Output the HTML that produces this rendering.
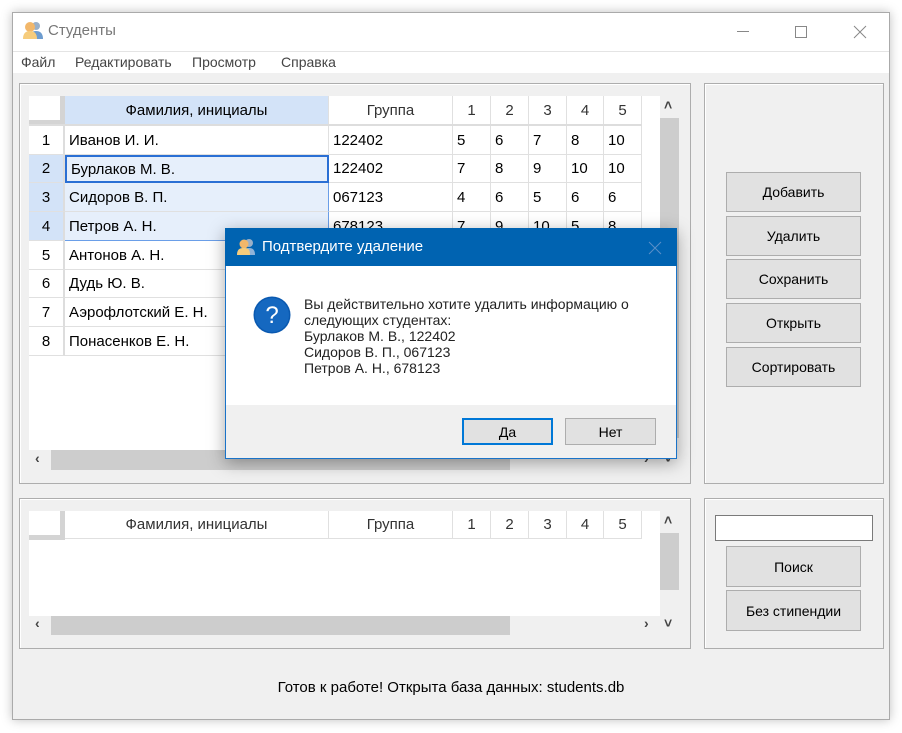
<!DOCTYPE html>
<html><head><meta charset="utf-8"><style>
*{box-sizing:border-box;margin:0;padding:0}
body{width:902px;height:733px;background:#fff;position:relative;overflow:hidden;font-family:"Segoe UI","Liberation Sans","DejaVu Sans",sans-serif;color:#000}
.a{position:absolute}
.win{left:12px;top:12px;width:878px;height:708px;background:#f0f0f0;border:1px solid #aaa;box-shadow:0 0 10px rgba(0,0,0,.25)}
.grp{position:absolute;border:1px solid #adadad;box-shadow:inset 1px 1px 0 #fff}
.btn{position:absolute;background:#e1e1e1;border:1px solid #adadad;font-size:14px;display:flex;align-items:center;justify-content:center}
.c{position:absolute;font-size:15px;display:flex;align-items:center;border-right:1px solid #e0e0e0;border-bottom:1px solid #e0e0e0;padding-left:4px;white-space:nowrap}
.h{justify-content:center;padding-left:0;color:#333}
.rn{justify-content:center;padding-left:0;background:#fff;border-right:2px solid #ddd}
.ar{font-size:14px;color:#444;font-weight:bold}
</style></head><body>
<div class="a win"></div>
<div class="a" style="left:13px;top:13px;width:876px;height:39px;background:#fff;border-bottom:1px solid #e4e4e4"></div>
<svg class="a" style="left:22px;top:20px" width="22" height="20"><circle cx="14" cy="6" r="4" fill="#9ab0c8"/><path d="M7 19c0-6 3-8 7-8s7 2 7 8z" fill="#6d9ccf"/><circle cx="8" cy="7" r="5" fill="#f2b76a"/><path d="M1 19c0-6 3-8 7-8s7 2 7 8z" fill="#f6cc7c"/></svg>
<div class="a" style="left:48px;top:22px;font-size:15px;color:#777">Студенты</div>
<div class="a" style="left:737px;top:31px;width:12px;height:1px;background:#888"></div>
<div class="a" style="left:795px;top:26px;width:12px;height:12px;border:1px solid #888"></div>
<svg class="a" style="left:853px;top:25px" width="14" height="14"><path d="M1 1L13 13M13 1L1 13" stroke="#888" stroke-width="1"/></svg>
<div class="a" style="left:13px;top:52px;width:876px;height:21px;background:#fff"></div>
<div class="a" style="left:21px;top:54px;font-size:14px;color:#444">Файл</div>
<div class="a" style="left:75px;top:54px;font-size:14px;color:#444">Редактировать</div>
<div class="a" style="left:192px;top:54px;font-size:14px;color:#444">Просмотр</div>
<div class="a" style="left:281px;top:54px;font-size:14px;color:#444">Справка</div>
<div class="grp" style="left:19px;top:83px;width:672px;height:401px"></div>
<div class="a" style="left:29px;top:96px;width:631px;height:354px;background:#fff"></div>
<div class="a" style="left:29px;top:96px;width:36px;height:29px;background:#fff;border-right:5px solid #d4d4d4;border-bottom:5px solid #d4d4d4"></div>
<div class="c h" style="left:65px;top:96px;width:264px;height:29px;background:#d3e3f8;color:#000">Фамилия, инициалы</div>
<div class="c h" style="left:329px;top:96px;width:124px;height:29px">Группа</div>
<div class="c h" style="left:453px;top:96px;width:38px;height:29px">1</div>
<div class="c h" style="left:491px;top:96px;width:38px;height:29px">2</div>
<div class="c h" style="left:529px;top:96px;width:38px;height:29px">3</div>
<div class="c h" style="left:567px;top:96px;width:37px;height:29px">4</div>
<div class="c h" style="left:604px;top:96px;width:38px;height:29px">5</div>
<div class="a" style="left:29px;top:124px;width:613px;height:2px;background:#ddd"></div>

<div class="c rn" style="left:29px;top:126px;width:36px;height:29px">1</div><div class="c" style="left:65px;top:126px;width:264px;height:29px">Иванов И. И.</div><div class="c" style="left:329px;top:126px;width:124px;height:29px">122402</div><div class="c" style="left:453px;top:126px;width:38px;height:29px">5</div><div class="c" style="left:491px;top:126px;width:38px;height:29px">6</div><div class="c" style="left:529px;top:126px;width:38px;height:29px">7</div><div class="c" style="left:567px;top:126px;width:37px;height:29px">8</div><div class="c" style="left:604px;top:126px;width:38px;height:29px">10</div>

<div class="c rn" style="left:29px;top:155px;width:36px;height:28px;background:#d3e3f8">2</div><div class="c" style="left:65px;top:155px;width:264px;height:28px;background:#e6effb;border:2px solid #2a6fd4">Бурлаков М. В.</div><div class="c" style="left:329px;top:155px;width:124px;height:28px">122402</div><div class="c" style="left:453px;top:155px;width:38px;height:28px">7</div><div class="c" style="left:491px;top:155px;width:38px;height:28px">8</div><div class="c" style="left:529px;top:155px;width:38px;height:28px">9</div><div class="c" style="left:567px;top:155px;width:37px;height:28px">10</div><div class="c" style="left:604px;top:155px;width:38px;height:28px">10</div>

<div class="c rn" style="left:29px;top:183px;width:36px;height:29px;background:#d3e3f8">3</div><div class="c" style="left:65px;top:183px;width:264px;height:29px;background:#e6effb;border-right:1px solid #6a9ee8">Сидоров В. П.</div><div class="c" style="left:329px;top:183px;width:124px;height:29px">067123</div><div class="c" style="left:453px;top:183px;width:38px;height:29px">4</div><div class="c" style="left:491px;top:183px;width:38px;height:29px">6</div><div class="c" style="left:529px;top:183px;width:38px;height:29px">5</div><div class="c" style="left:567px;top:183px;width:37px;height:29px">6</div><div class="c" style="left:604px;top:183px;width:38px;height:29px">6</div>

<div class="c rn" style="left:29px;top:212px;width:36px;height:29px;background:#d3e3f8">4</div><div class="c" style="left:65px;top:212px;width:264px;height:29px;background:#e6effb;border-right:1px solid #6a9ee8;border-bottom:1px solid #6a9ee8">Петров А. Н.</div><div class="c" style="left:329px;top:212px;width:124px;height:29px">678123</div><div class="c" style="left:453px;top:212px;width:38px;height:29px">7</div><div class="c" style="left:491px;top:212px;width:38px;height:29px">9</div><div class="c" style="left:529px;top:212px;width:38px;height:29px">10</div><div class="c" style="left:567px;top:212px;width:37px;height:29px">5</div><div class="c" style="left:604px;top:212px;width:38px;height:29px">8</div>

<div class="c rn" style="left:29px;top:241px;width:36px;height:29px">5</div><div class="c" style="left:65px;top:241px;width:264px;height:29px">Антонов А. Н.</div>
<div class="c rn" style="left:29px;top:270px;width:36px;height:28px">6</div><div class="c" style="left:65px;top:270px;width:264px;height:28px">Дудь Ю. В.</div>
<div class="c rn" style="left:29px;top:298px;width:36px;height:29px">7</div><div class="c" style="left:65px;top:298px;width:264px;height:29px">Аэрофлотский Е. Н.</div>
<div class="c rn" style="left:29px;top:327px;width:36px;height:29px">8</div><div class="c" style="left:65px;top:327px;width:264px;height:29px">Понасенков Е. Н.</div>

<div class="a" style="left:660px;top:96px;width:19px;height:374px;background:#f0f0f0"></div>
<div class="a" style="left:660px;top:118px;width:19px;height:320px;background:#cdcdcd"></div>
<div class="a ar" style="left:664px;top:97px">&#x2C4;</div>
<div class="a ar" style="left:664px;top:450px">&#x2C5;</div>
<div class="a" style="left:29px;top:450px;width:631px;height:20px;background:#f0f0f0"></div>
<div class="a" style="left:51px;top:450px;width:459px;height:20px;background:#cdcdcd"></div>
<div class="a ar" style="left:35px;top:450px">‹</div>
<div class="a ar" style="left:644px;top:450px">›</div>
<div class="grp" style="left:704px;top:83px;width:180px;height:401px"></div>
<div class="btn" style="left:726px;top:172px;width:135px;height:40px">Добавить</div>
<div class="btn" style="left:726px;top:216px;width:135px;height:40px">Удалить</div>
<div class="btn" style="left:726px;top:259px;width:135px;height:40px">Сохранить</div>
<div class="btn" style="left:726px;top:303px;width:135px;height:40px">Открыть</div>
<div class="btn" style="left:726px;top:347px;width:135px;height:40px">Сортировать</div>
<div class="grp" style="left:19px;top:498px;width:672px;height:151px"></div>
<div class="a" style="left:29px;top:511px;width:631px;height:106px;background:#fff"></div>
<div class="a" style="left:29px;top:511px;width:36px;height:29px;background:#fff;border-right:5px solid #d4d4d4;border-bottom:5px solid #d4d4d4"></div>
<div class="c h" style="left:65px;top:511px;width:264px;height:28px">Фамилия, инициалы</div>
<div class="c h" style="left:329px;top:511px;width:124px;height:28px">Группа</div>
<div class="c h" style="left:453px;top:511px;width:38px;height:28px">1</div>
<div class="c h" style="left:491px;top:511px;width:38px;height:28px">2</div>
<div class="c h" style="left:529px;top:511px;width:38px;height:28px">3</div>
<div class="c h" style="left:567px;top:511px;width:37px;height:28px">4</div>
<div class="c h" style="left:604px;top:511px;width:38px;height:28px">5</div>
<div class="a" style="left:660px;top:511px;width:19px;height:126px;background:#f0f0f0"></div>
<div class="a" style="left:660px;top:533px;width:19px;height:57px;background:#cdcdcd"></div>
<div class="a ar" style="left:664px;top:512px">&#x2C4;</div>
<div class="a ar" style="left:664px;top:615px">&#x2C5;</div>
<div class="a" style="left:29px;top:616px;width:631px;height:20px;background:#f0f0f0"></div>
<div class="a" style="left:51px;top:616px;width:459px;height:19px;background:#cdcdcd"></div>
<div class="a ar" style="left:35px;top:615px">‹</div>
<div class="a ar" style="left:644px;top:615px">›</div>
<div class="grp" style="left:704px;top:498px;width:180px;height:151px"></div>
<div class="a" style="left:715px;top:515px;width:158px;height:26px;background:#fff;border:1px solid #7a7a7a"></div>
<div class="btn" style="left:726px;top:546px;width:135px;height:41px">Поиск</div>
<div class="btn" style="left:726px;top:590px;width:135px;height:41px">Без стипендии</div>
<div class="a" style="left:0;width:902px;top:679px;text-align:center;font-size:15px">Готов к работе! Открыта база данных: students.db</div>
<div class="a" style="left:225px;top:228px;width:452px;height:231px;background:#fff;border:1px solid #1a73c8;box-shadow:0 4px 16px rgba(0,0,0,.35)"></div>
<div class="a" style="left:225px;top:228px;width:452px;height:38px;background:#0063b1"></div>
<svg class="a" style="left:236px;top:238px" width="20" height="18"><circle cx="13" cy="5" r="4" fill="#9ab0c8"/><path d="M6 17c0-5 3-7 7-7s6 2 6 7z" fill="#8fb3d9"/><circle cx="8" cy="6" r="4.5" fill="#f2b76a"/><path d="M1 17c0-6 3-7 7-7s6 1 6 7z" fill="#f6cc7c"/></svg>
<div class="a" style="left:262px;top:238px;font-size:15px;color:#fff">Подтвердите удаление</div>
<svg class="a" style="left:648px;top:241px" width="14" height="14"><path d="M1 1L13 13M13 1L1 13" stroke="#5a8fc8" stroke-width="1"/></svg>
<svg class="a" style="left:253px;top:296px" width="38" height="38"><circle cx="19" cy="19" r="18.5" fill="#0a59b0"/><circle cx="19" cy="19" r="17" fill="#1568c0"/><text x="19" y="27" text-anchor="middle" font-size="24" font-family="Liberation Sans" fill="#fff">?</text></svg>
<div class="a" style="left:304px;top:296px;font-size:14px;line-height:16px;color:#222">Вы действительно хотите удалить информацию о<br>следующих студентах:<br>Бурлаков М. В., 122402<br>Сидоров В. П., 067123<br>Петров А. Н., 678123</div>
<div class="a" style="left:226px;top:405px;width:450px;height:53px;background:#f0f0f0"></div>
<div class="btn" style="left:462px;top:418px;width:91px;height:27px;border:2px solid #0078d7;font-size:14px">Да</div>
<div class="btn" style="left:565px;top:418px;width:91px;height:27px;font-size:14px">Нет</div>
</body></html>
